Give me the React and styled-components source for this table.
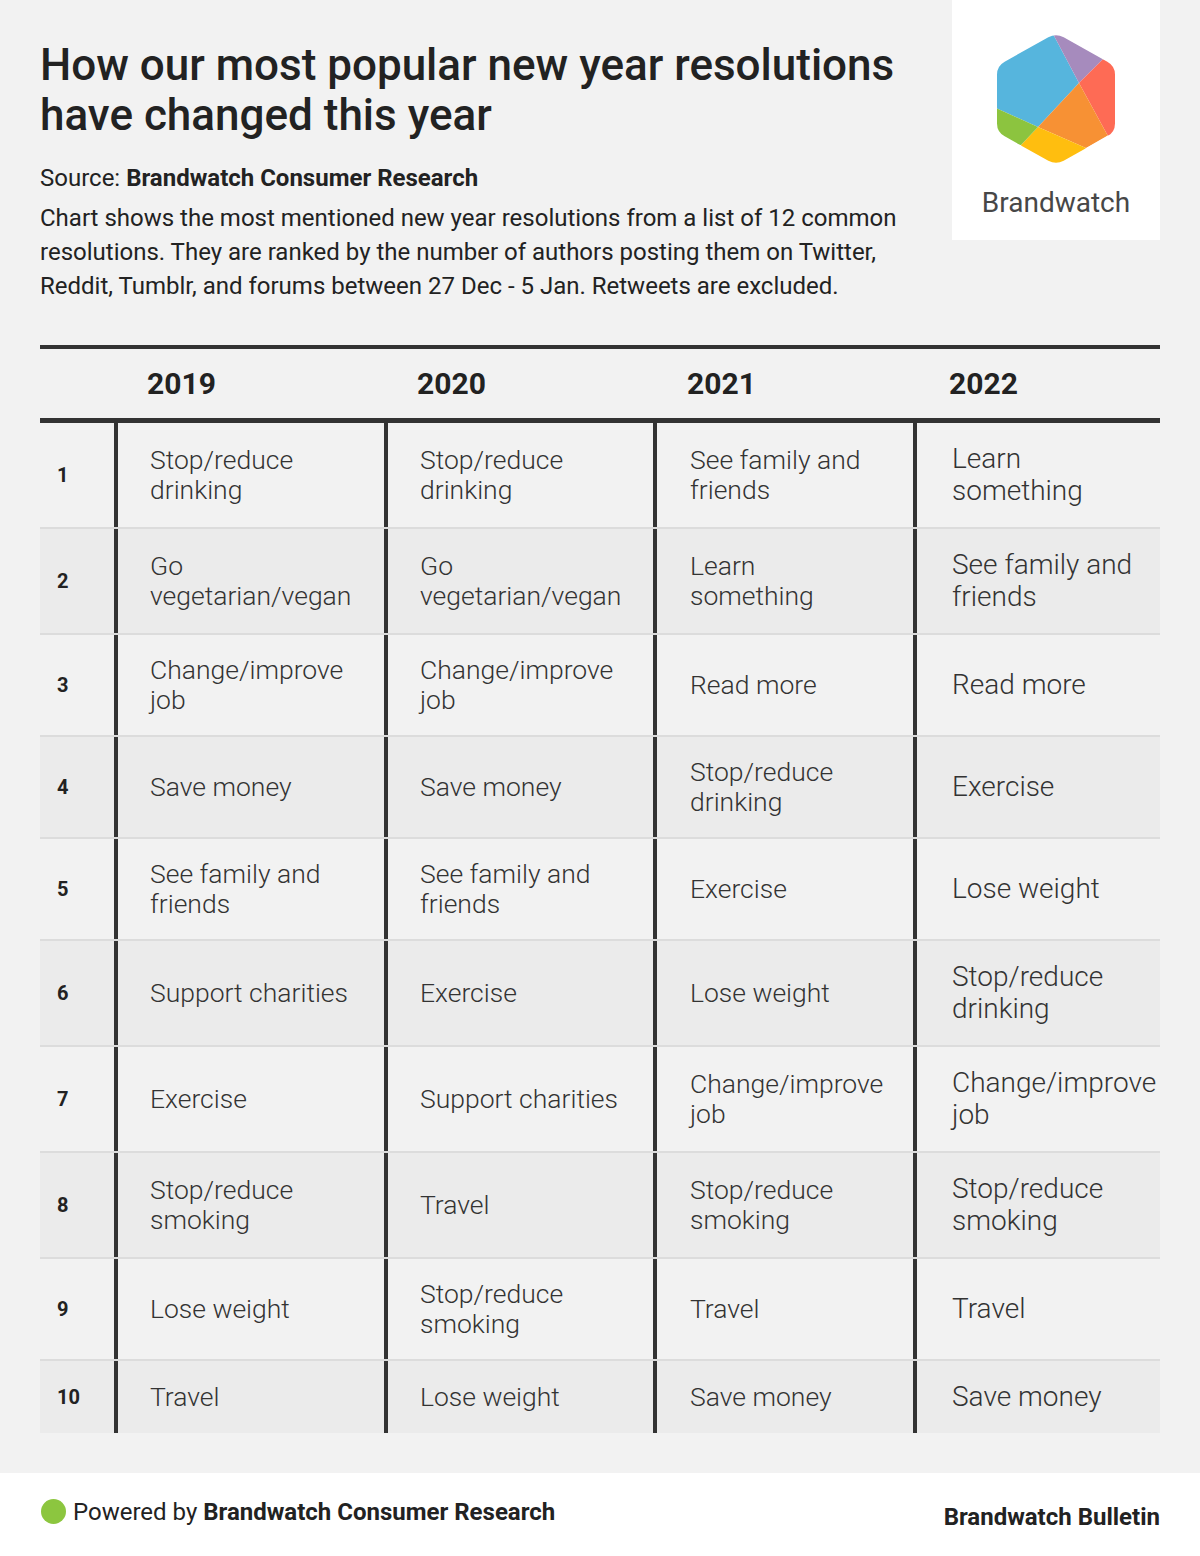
import React from 'react';
import styled, { createGlobalStyle } from 'styled-components';

const GlobalStyle = createGlobalStyle`
  html, body {
    margin: 0;
    padding: 0;
    background: #f2f2f2;
  }
  body {
    font-family: Roboto, "Noto Sans", Arial, sans-serif;
    color: #222;
  }
`;

const Page = styled.div`
  width: 1200px;
  min-height: 1556px;
  display: flex;
  flex-direction: column;
  background: #f2f2f2;
`;

const Main = styled.main`
  padding: 0 40px 40px;
  flex: 1;
`;

const Header = styled.header`
  display: flex;
  justify-content: space-between;
  align-items: flex-start;
`;

const Intro = styled.div`
  width: 870px;
  padding-top: 40px;
`;

const Title = styled.h1`
  margin: 0;
  font-size: 44px;
  line-height: 50px;
  font-weight: 500;
  color: #222;
`;

const Source = styled.p`
  margin: 23px 0 0;
  font-size: 24px;
  line-height: 30px;
  color: #222;

  b { font-weight: 700; }
`;

const Description = styled.p`
  margin: 8px 0 0;
  font-size: 24px;
  line-height: 34px;
  color: #222;
`;

const LogoBox = styled.div`
  width: 208px;
  height: 240px;
  background: #fff;
  display: flex;
  flex-direction: column;
  align-items: center;
  padding-top: 32px;
  box-sizing: border-box;
`;

const LogoWord = styled.div`
  margin-top: 20px;
  font-size: 28px;
  line-height: 34px;
  color: #474747;
  font-weight: 400;
`;

const Table = styled.div`
  margin-top: 42px;
  border-top: 4px solid #333;
`;

const HeadRow = styled.div`
  display: grid;
  grid-template-columns: 74px 270px 269px 260px 1fr;
  height: 69px;
  align-items: center;
  border-bottom: 5px solid #333;
`;

const Year = styled.div`
  padding-left: ${p => p.$pad}px;
  font-size: 30px;
  font-weight: 700;
  color: #222;
`;

const Row = styled.div`
  display: grid;
  grid-template-columns: 74px 270px 269px 260px 1fr;
  background: ${p => (p.$even ? '#ebebeb' : '#f2f2f2')};
  border-top: ${p => (p.$first ? 'none' : '2px solid #dcdcdc')};
`;

const Rank = styled.div`
  display: flex;
  align-items: center;
  padding-left: 17px;
  font-size: 20px;
  font-weight: 700;
  color: #222;
`;

const Cell = styled.div`
  display: flex;
  align-items: center;
  border-left: 4px solid #333;
  padding: 20px 0 20px ${p => p.$pad}px;
  font-size: ${p => (p.$big ? 28 : 26.5)}px;
  line-height: ${p => (p.$big ? 32 : 30)}px;
  font-weight: 300;
  color: #333;
  white-space: pre;
`;

const Footer = styled.footer`
  height: 83px;
  background: #fff;
  display: flex;
  align-items: center;
  justify-content: space-between;
  padding: 0 40px 6px 41px;
  box-sizing: border-box;
`;

const Powered = styled.div`
  display: flex;
  align-items: center;
  gap: 7px;
  font-size: 24px;
  color: #222;
  b { font-weight: 700; }
`;

const Dot = styled.span`
  width: 25px;
  height: 25px;
  border-radius: 50%;
  background: #8cc63f;
`;

const Bulletin = styled.div`
  font-size: 24px;
  font-weight: 700;
  color: #222;
  padding-top: 10px;
`;

const years = [
  { label: '2019', pad: 33 },
  { label: '2020', pad: 33 },
  { label: '2021', pad: 34 },
  { label: '2022', pad: 36 },
];

const rows = [
  ['Stop/reduce\ndrinking', 'Stop/reduce\ndrinking', 'See family and\nfriends', 'Learn\nsomething'],
  ['Go\nvegetarian/vegan', 'Go\nvegetarian/vegan', 'Learn\nsomething', 'See family and\nfriends'],
  ['Change/improve\njob', 'Change/improve\njob', 'Read more', 'Read more'],
  ['Save money', 'Save money', 'Stop/reduce\ndrinking', 'Exercise'],
  ['See family and\nfriends', 'See family and\nfriends', 'Exercise', 'Lose weight'],
  ['Support charities', 'Exercise', 'Lose weight', 'Stop/reduce\ndrinking'],
  ['Exercise', 'Support charities', 'Change/improve\njob', 'Change/improve\njob'],
  ['Stop/reduce\nsmoking', 'Travel', 'Stop/reduce\nsmoking', 'Stop/reduce\nsmoking'],
  ['Lose weight', 'Stop/reduce\nsmoking', 'Travel', 'Travel'],
  ['Travel', 'Lose weight', 'Save money', 'Save money'],
];

const cellPads = [32, 32, 33, 35];

// rounded hexagon outline used to clip the coloured pieces
const hexPoints = [[60, 1], [119, 34], [119, 100], [60, 133], [1, 100], [1, 34]];
function roundedHex(points, t) {
  const n = points.length;
  let d = '';
  points.forEach((v, i) => {
    const prev = points[(i - 1 + n) % n];
    const next = points[(i + 1) % n];
    const a = [v[0] + (prev[0] - v[0]) * t, v[1] + (prev[1] - v[1]) * t];
    const b = [v[0] + (next[0] - v[0]) * t, v[1] + (next[1] - v[1]) * t];
    d += `${i === 0 ? 'M' : 'L'}${a[0]},${a[1]} Q${v[0]},${v[1]} ${b[0]},${b[1]} `;
  });
  return d + 'Z';
}

function Logo() {
  return (
    <svg width="120" height="134" viewBox="0 0 120 134">
      <defs>
        <clipPath id="hexclip">
          <path d={roundedHex(hexPoints, 0.13)} />
        </clipPath>
      </defs>
      <g clipPath="url(#hexclip)">
        <polygon points="0,0 56,0 83,51 42,95 0,76" fill="#56b5dd" />
        <polygon points="56,0 70,0 120,25 106.7,27.5 83,51" fill="#a68bbd" />
        <polygon points="106.7,27.5 120,25 120,105 111.7,103.6 83,51" fill="#fe6b55" />
        <polygon points="83,51 111.7,103.6 90,116 42,95" fill="#f79134" />
        <polygon points="42,95 90,116 80,134 30,134 25,113" fill="#ffbe0f" />
        <polygon points="42,95 25,113 0,110 0,76" fill="#8cc43f" />
      </g>
    </svg>
  );
}

export default function App() {
  return (
    <Page>
      <GlobalStyle />
      <Main>
        <Header>
          <Intro>
            <Title>How our most popular new year resolutions have changed this year</Title>
            <Source>
              Source: <b>Brandwatch Consumer Research</b>
            </Source>
            <Description>
              Chart shows the most mentioned new year resolutions from a list of 12 common
              resolutions. They are ranked by the number of authors posting them on Twitter,
              Reddit, Tumblr, and forums between 27 Dec - 5 Jan. Retweets are excluded.
            </Description>
          </Intro>
          <LogoBox>
            <Logo />
            <LogoWord>Brandwatch</LogoWord>
          </LogoBox>
        </Header>

        <Table>
          <HeadRow>
            <div />
            {years.map(y => (
              <Year key={y.label} $pad={y.pad}>{y.label}</Year>
            ))}
          </HeadRow>
          {rows.map((r, i) => (
            <Row key={i} $even={i % 2 === 1} $first={i === 0}>
              <Rank>{i + 1}</Rank>
              {r.map((text, j) => (
                <Cell key={j} $pad={cellPads[j]} $big={j === 3}>{text}</Cell>
              ))}
            </Row>
          ))}
        </Table>
      </Main>
      <Footer>
        <Powered>
          <Dot />
          <span>Powered by <b>Brandwatch Consumer Research</b></span>
        </Powered>
        <Bulletin>Brandwatch Bulletin</Bulletin>
      </Footer>
    </Page>
  );
}
